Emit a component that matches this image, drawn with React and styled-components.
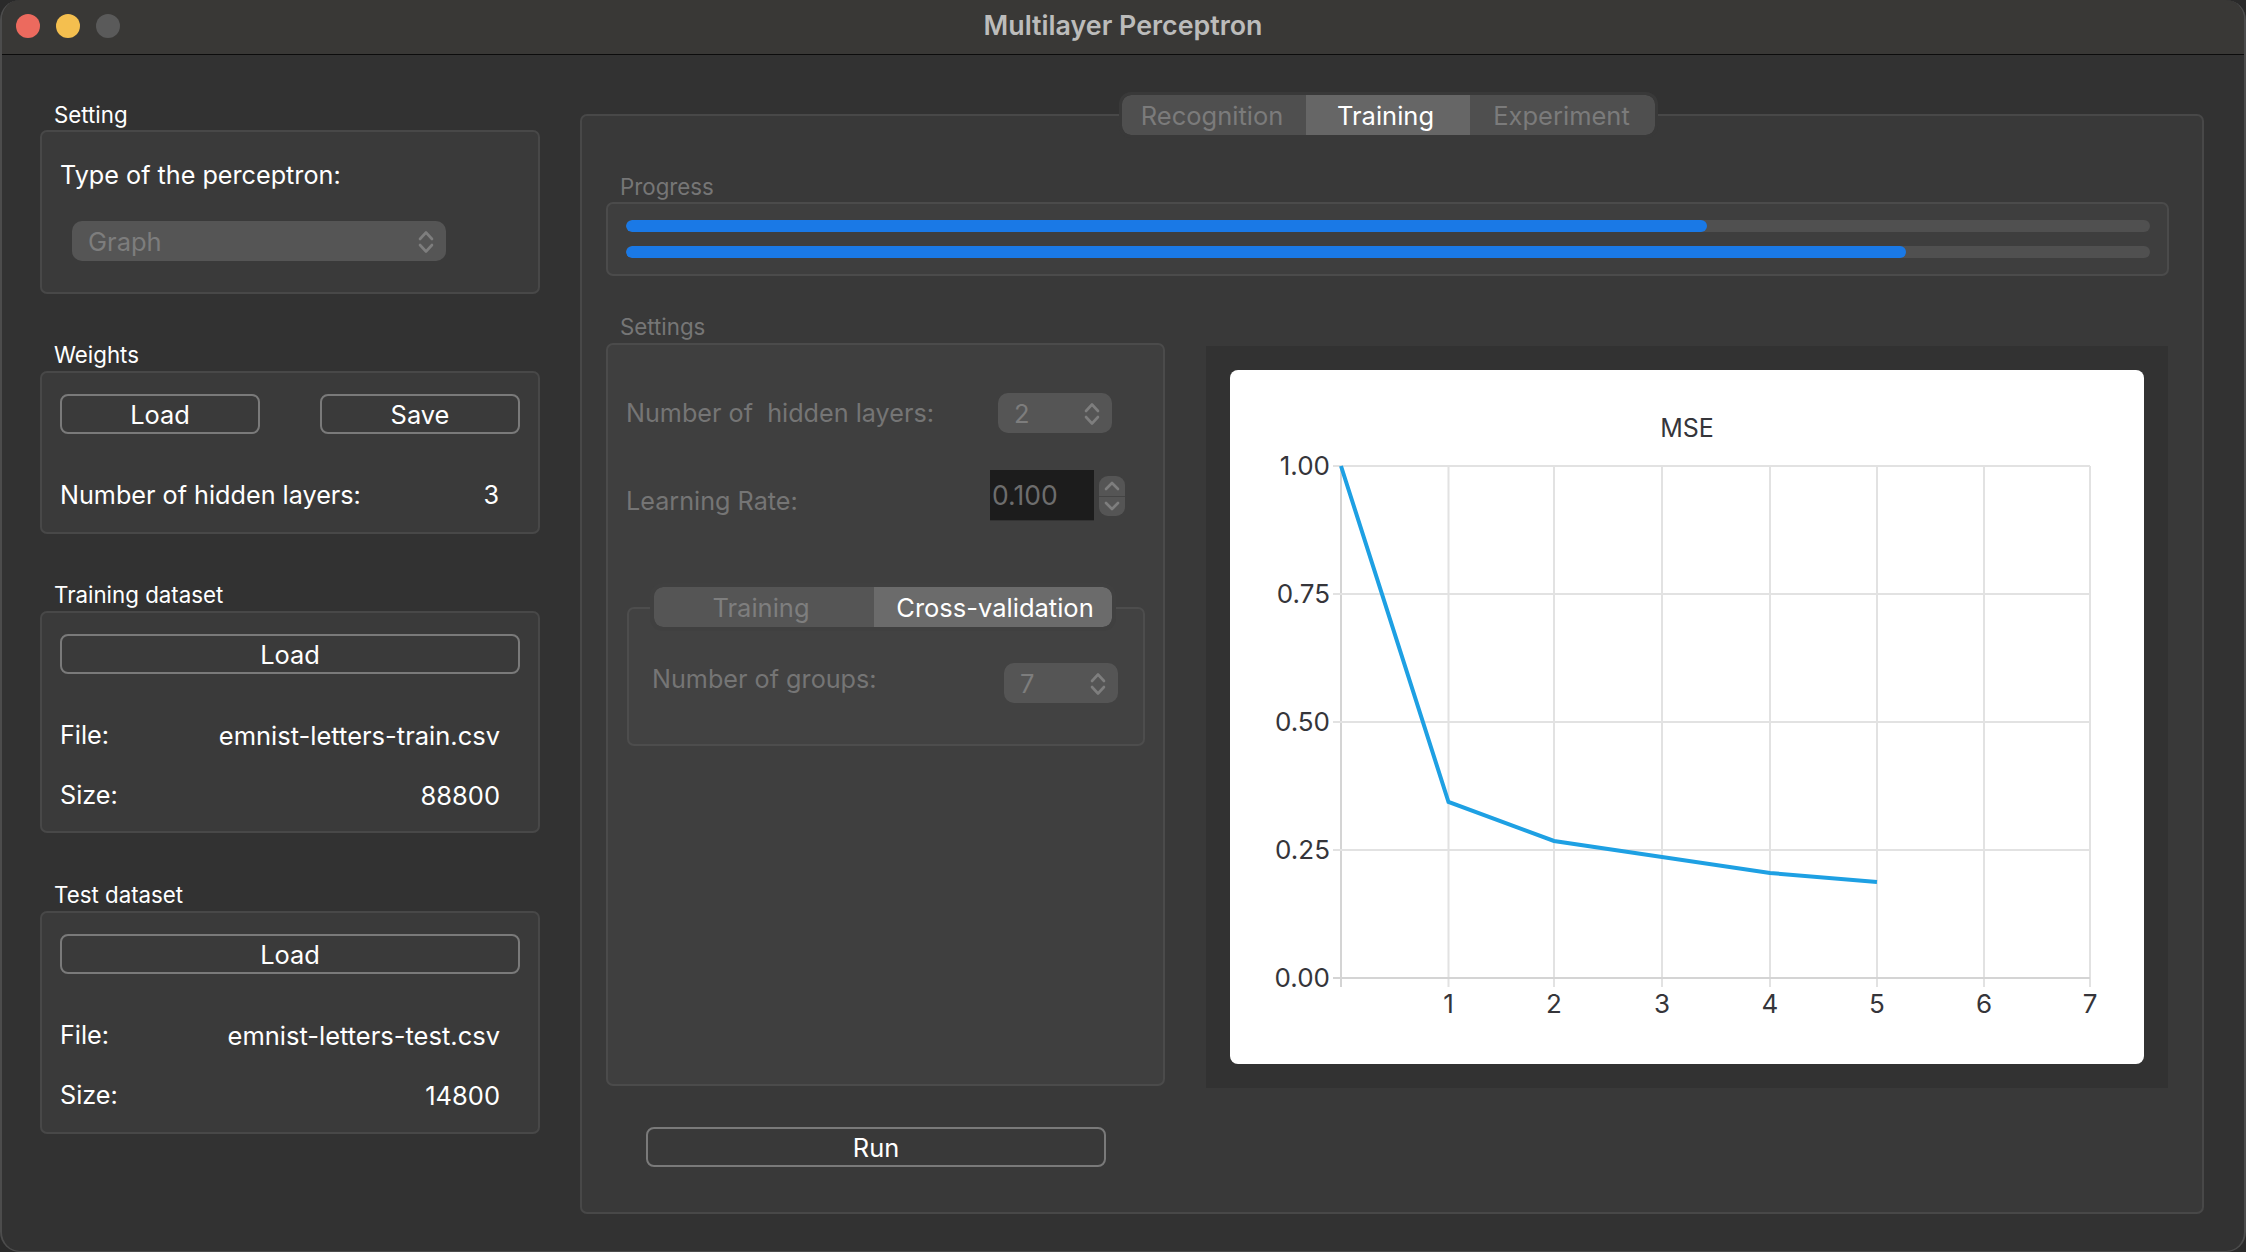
import React from "react";
import styled, { createGlobalStyle } from "styled-components";

const Global = createGlobalStyle`
  html, body { margin: 0; padding: 0; background: #2a2a2a; }
  * { box-sizing: border-box; }
  body { font-family: Inter, "Liberation Sans", sans-serif; }
`;

const Win = styled.div`
  width: 2246px; height: 1252px; background: #323232; border-radius: 20px;
  border: solid #4c4c4c; border-width: 0 2px 1px 2px; overflow: hidden;
  display: flex; flex-direction: column; color: #fff;
`;
const TitleBar = styled.header`
  height: 55px; flex: none; background: #393836; border-bottom: 1px solid #0c0c0c;
  display: flex; align-items: center; position: relative; padding: 0 0 2px 14px; gap: 16px;
`;
const Light = styled.span`
  width: 24px; height: 24px; border-radius: 50%; background: ${p => p.$c};
`;
const Title = styled.h1`
  position: absolute; left: 0; right: 0; top: 10px; margin: 0; text-align: center; line-height: 30px;
  font-size: 26.8px; font-weight: 600; color: #bcbcbb;
`;
const Main = styled.main`
  flex: 1; display: flex; padding-left: 38px; gap: 40px; min-height: 0;
`;
const LeftCol = styled.section`
  width: 500px; flex: none; padding-top: 43px; display: flex; flex-direction: column; gap: 45px;
`;
const Group = styled.div`
  margin-top: ${p => p.$mt ?? 0}px;
`;
const GroupTitle = styled.div`
  height: 32px; line-height: ${p => 32 + (p.$dy ?? 0)}px; padding-left: ${p => p.$pad ?? 14}px; font-size: 22.3px;
  color: ${p => (p.$dim ? "#767676" : "#fff")};
`;
const Box = styled.div`
  height: ${p => p.$h}px; background: #3a3a3a; border: 2px solid #484848; border-radius: 7px;
  padding: 21px 18px 0 18px;
`;
const Row = styled.div`
  height: 40px; margin-top: ${p => p.$mt ?? 0}px; display: flex; align-items: center; justify-content: space-between;
  font-size: 25.2px; padding-right: ${p => p.$pr ?? 0}px;
`;
const Value = styled.span`
  font-size: 25.5px;
`;
const OutlineBtn = styled.button`
  height: 40px; width: ${p => p.$w || "100%"}; background: transparent; border: 2px solid #7a7a7a; border-radius: 8px;
  color: #fff; font: 25.4px Inter, "Liberation Sans", sans-serif; padding: 1px 0 0; flex: none;
  margin: ${p => p.$m || 0};
  display: block;
`;
const Chev = () => (
  <svg width="16" height="24" viewBox="0 0 16 24" fill="none" stroke="#7e7e7e" strokeWidth="2.6" strokeLinecap="round" strokeLinejoin="round">
    <path d="M2 9 L8 2.5 L14 9" />
    <path d="M2 15 L8 21.5 L14 15" />
  </svg>
);
const Combo = styled.div`
  width: ${p => p.$w}px; height: 40px; flex: none; background: #555; border-radius: 10px;
  margin-left: ${p => p.$ml ?? 0}px; margin-top: ${p => p.$mt ?? 0}px;
  display: flex; align-items: center; justify-content: space-between; color: #7d7d7d; font-size: 25.5px;
  padding: 1px ${p => p.$pr ?? 12}px 0 ${p => p.$pl ?? 16}px;
`;
const RightPanel = styled.section`
  width: 1624px; height: 1100px; margin-top: 59px; flex: none; background: #393939;
  border: 2px solid #484848; border-radius: 7px; padding: 0 0 0 24px;
`;
const TopTabs = styled.div`
  display: flex; width: 533px; height: 40px; margin: -21px 0 0 516px; border-radius: 9px; overflow: hidden;
  outline: 3px solid #393939;
`;
const Tab = styled.div`
  width: ${p => p.$w}px; display: flex; align-items: center; justify-content: center; font-size: 25.5px;
  padding-right: ${p => p.$pr ?? 4}px;
  background: ${p => (p.$on ? "#666" : "#4f4f4f")}; color: ${p => (p.$on ? "#fff" : "#7b7b7b")};
`;
const Section = styled.div`
  margin-top: ${p => p.$mt}px;
`;
const ProgressBox = styled.div`
  width: 1563px; height: 74px; background: #3e3e3e; border: 2px solid #4b4b4b; border-radius: 7px;
  padding: 16px 17px 0 18px; display: flex; flex-direction: column; gap: 14px;
`;
const Track = styled.div`
  height: 12px; border-radius: 6px; background: #505050; overflow: hidden;
`;
const Fill = styled.div`
  height: 100%; background: #1a79e6; border-radius: 6px;
`;
const Lower = styled.div`
  display: flex; gap: 41px; margin-top: 35px; align-items: flex-start;
`;
const SettingsCol = styled.div`
  width: 559px; flex: none;
`;
const SettingsBox = styled.div`
  height: 743px; background: #3f3f3f; border: 2px solid #4b4b4b; border-radius: 7px; padding: 48px 0 0 18px;
`;
const DimRow = styled.div`
  display: flex; margin-top: ${p => p.$mt ?? 0}px; color: #757575; font-size: 25.2px;
`;
const DimLabel = styled.div`
  width: ${p => p.$w}px; flex: none; height: ${p => p.$h ?? 40}px; line-height: ${p => p.$h ?? 40}px;
  padding-top: ${p => p.$pt ?? 0}px; box-sizing: content-box;
`;
const NumInput = styled.div`
  width: 104px; height: 51px; background: #1c1c1c; color: #6d6d6d; font-size: 26.5px; line-height: 50px; padding-left: 2px; border-bottom: 1px solid #333;
`;
const Spin = styled.div`
  width: 26px; height: 40px; margin: 6px 0 0 5px; border-radius: 9px; background: #555;
  display: flex; flex-direction: column; overflow: hidden;
`;
const SpinPart = styled.div`
  flex: 1; display: flex; align-items: center; justify-content: center;
  & + & { border-top: 1px solid #444; }
`;
const InnerBox = styled.div`
  width: 518px; height: 139px; margin: 86px 0 0 1px; border: 2px solid #4d4d4d; border-radius: 7px; background: #424242;
`;
const InnerTabs = styled.div`
  display: flex; width: 458px; height: 40px; margin: -22px 0 0 25px; border-radius: 9px; overflow: hidden;
  outline: 4px solid #404040;
`;
const InnerTab = styled.div`
  width: ${p => p.$w}px; display: flex; align-items: center; justify-content: center; font-size: 25.5px;
  padding: ${p => (p.$on ? "0 0 0 4px" : "0 6px 0 0")};
  background: ${p => (p.$on ? "#6b6b6b" : "#555")}; color: ${p => (p.$on ? "#fff" : "#7e7e7e")};
`;
const GroupsRow = styled.div`
  display: flex; margin: 36px 0 0 23px; color: #757575; font-size: 25.2px;
`;
const ChartFrame = styled.div`
  width: 962px; height: 742px; margin-top: 35px; background: #323232; padding: 24px; flex: none;
`;
const ChartCard = styled.div`
  width: 914px; height: 694px; background: #fff; border-radius: 8px; overflow: hidden;
`;
const ChartSvg = styled.svg`
  display: block; font-family: Inter, "Liberation Sans", sans-serif; fill: #35353a;
`;

const xs = [1341, 1448.5, 1554, 1662, 1770, 1877, 1984, 2090].map(v => v - 1230);
const ys = [466, 594, 722, 850, 978].map(v => v - 370);
const yl = ["1.00", "0.75", "0.50", "0.25", "0.00"];
const pts = [[1341, 466], [1448.5, 802], [1554, 841], [1662, 857], [1770, 873], [1877, 882]]
  .map(([a, b]) => `${a - 1230},${b - 370}`).join(" ");

const Chart = () => (
  <ChartSvg width="914" height="694" viewBox="0 0 914 694">
    <text x="457" y="67" fontSize="25" textAnchor="middle">MSE</text>
    {xs.map((x, i) => (
      <line key={x} x1={x} x2={x} y1={ys[0]} y2={ys[4] + 9} stroke={i === 0 ? "#d4d4d4" : "#e2e2e2"} strokeWidth="2" />
    ))}
    {ys.map((y, i) => (
      <line key={y} x1={xs[0] - 8} x2={xs[7]} y1={y} y2={y} stroke={i === 4 ? "#d4d4d4" : "#e2e2e2"} strokeWidth="2" />
    ))}
    {ys.map((y, i) => (
      <text key={y} x={xs[0] - 11} y={y + 9} fontSize="26" textAnchor="end">{yl[i]}</text>
    ))}
    {xs.slice(1).map((x, i) => (
      <text key={x} x={x} y={643} fontSize="26" textAnchor="middle">{i + 1}</text>
    ))}
    <polyline points={pts} fill="none" stroke="#1ea0e3" strokeWidth="4" />
  </ChartSvg>
);

const Up = () => (
  <svg width="16" height="10" viewBox="0 0 16 10" fill="none" stroke="#7e7e7e" strokeWidth="2.6" strokeLinecap="round" strokeLinejoin="round"><path d="M2 8 L8 2 L14 8" /></svg>
);
const Down = () => (
  <svg width="16" height="10" viewBox="0 0 16 10" fill="none" stroke="#7e7e7e" strokeWidth="2.6" strokeLinecap="round" strokeLinejoin="round"><path d="M2 2 L8 8 L14 2" /></svg>
);

export default function App() {
  return (
    <>
      <Global />
      <Win>
        <TitleBar>
          <Light $c="#ec6a5e" />
          <Light $c="#f4bf4f" />
          <Light $c="#5a5a5a" />
          <Title>Multilayer Perceptron</Title>
        </TitleBar>
        <Main>
          <LeftCol>
            <Group>
              <GroupTitle $dy={2}>Setting</GroupTitle>
              <Box $h={164}>
                <Row $mt={2}>Type of the perceptron:</Row>
                <Combo $w={374} $ml={12} $mt={26} $pr={12}>Graph<Chev /></Combo>
              </Box>
            </Group>
            <Group>
              <GroupTitle>Weights</GroupTitle>
              <Box $h={163}>
                <Row>
                  <OutlineBtn $w="200px">Load</OutlineBtn>
                  <OutlineBtn $w="200px">Save</OutlineBtn>
                </Row>
                <Row $mt={41} $pr={21}><span>Number of hidden layers:</span><span>3</span></Row>
              </Box>
            </Group>
            <Group>
              <GroupTitle>Training dataset</GroupTitle>
              <Box $h={222}>
                <OutlineBtn>Load</OutlineBtn>
                <Row $mt={41} $pr={20}><span>File:</span><Value>emnist-letters-train.csv</Value></Row>
                <Row $mt={20} $pr={20}><span>Size:</span><Value>88800</Value></Row>
              </Box>
            </Group>
            <Group $mt={1}>
              <GroupTitle>Test dataset</GroupTitle>
              <Box $h={223}>
                <OutlineBtn>Load</OutlineBtn>
                <Row $mt={41} $pr={20}><span>File:</span><Value>emnist-letters-test.csv</Value></Row>
                <Row $mt={20} $pr={20}><span>Size:</span><Value>14800</Value></Row>
              </Box>
            </Group>
          </LeftCol>
          <RightPanel>
            <TopTabs>
              <Tab $w={184}>Recognition</Tab>
              <Tab $w={164} $on $pr={5}>Training</Tab>
              <Tab $w={185} $pr={2}>Experiment</Tab>
            </TopTabs>
            <Section $mt={35}>
              <GroupTitle $dim $dy={2}>Progress</GroupTitle>
              <ProgressBox>
                <Track><Fill style={{ width: `${(1707 - 626) / 15.24}%` }} /></Track>
                <Track><Fill style={{ width: `${(1906 - 626) / 15.24}%` }} /></Track>
              </ProgressBox>
            </Section>
            <Lower>
              <SettingsCol>
                <GroupTitle $dim>Settings</GroupTitle>
                <SettingsBox>
                  <DimRow>
                    <DimLabel $w={372}>Number of&nbsp; hidden layers:</DimLabel>
                    <Combo $w={114} $pl={16} $pr={12}>2<Chev /></Combo>
                  </DimRow>
                  <DimRow $mt={37}>
                    <DimLabel $w={364} $pt={11}>Learning Rate:</DimLabel>
                    <NumInput>0.100</NumInput>
                    <Spin>
                      <SpinPart><Up /></SpinPart>
                      <SpinPart><Down /></SpinPart>
                    </Spin>
                  </DimRow>
                  <InnerBox>
                    <InnerTabs>
                      <InnerTab $w={220}>Training</InnerTab>
                      <InnerTab $w={238} $on>Cross-validation</InnerTab>
                    </InnerTabs>
                    <GroupsRow>
                      <DimLabel $w={352} $h={32}>Number of groups:</DimLabel>
                      <Combo $w={114} $pl={16} $pr={12}>7<Chev /></Combo>
                    </GroupsRow>
                  </InnerBox>
                </SettingsBox>
                <OutlineBtn $w="460px" $m="41px 0 0 40px">Run</OutlineBtn>
              </SettingsCol>
              <ChartFrame>
                <ChartCard><Chart /></ChartCard>
              </ChartFrame>
            </Lower>
          </RightPanel>
        </Main>
      </Win>
    </>
  );
}
